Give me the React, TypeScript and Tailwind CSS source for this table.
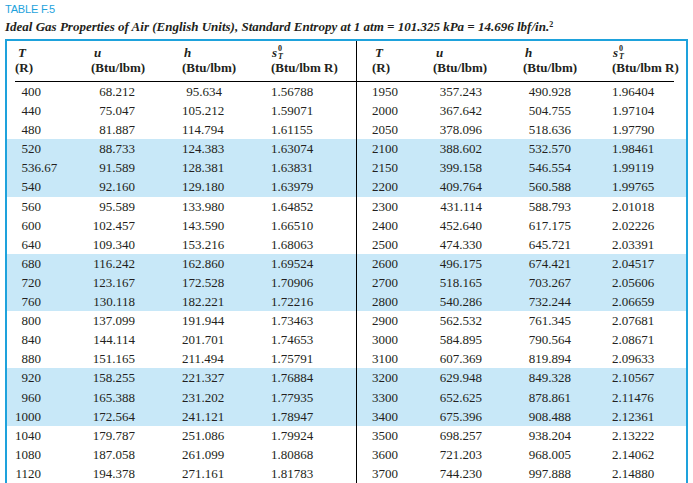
const rows: [string, string, string, string, string, string, string, string][] = [
  ['400', '68.212', '95.634', '1.56788', '1950', '357.243', '490.928', '1.96404'],
  ['440', '75.047', '105.212', '1.59071', '2000', '367.642', '504.755', '1.97104'],
  ['480', '81.887', '114.794', '1.61155', '2050', '378.096', '518.636', '1.97790'],
  ['520', '88.733', '124.383', '1.63074', '2100', '388.602', '532.570', '1.98461'],
  ['536.67', '91.589', '128.381', '1.63831', '2150', '399.158', '546.554', '1.99119'],
  ['540', '92.160', '129.180', '1.63979', '2200', '409.764', '560.588', '1.99765'],
  ['560', '95.589', '133.980', '1.64852', '2300', '431.114', '588.793', '2.01018'],
  ['600', '102.457', '143.590', '1.66510', '2400', '452.640', '617.175', '2.02226'],
  ['640', '109.340', '153.216', '1.68063', '2500', '474.330', '645.721', '2.03391'],
  ['680', '116.242', '162.860', '1.69524', '2600', '496.175', '674.421', '2.04517'],
  ['720', '123.167', '172.528', '1.70906', '2700', '518.165', '703.267', '2.05606'],
  ['760', '130.118', '182.221', '1.72216', '2800', '540.286', '732.244', '2.06659'],
  ['800', '137.099', '191.944', '1.73463', '2900', '562.532', '761.345', '2.07681'],
  ['840', '144.114', '201.701', '1.74653', '3000', '584.895', '790.564', '2.08671'],
  ['880', '151.165', '211.494', '1.75791', '3100', '607.369', '819.894', '2.09633'],
  ['920', '158.255', '221.327', '1.76884', '3200', '629.948', '849.328', '2.10567'],
  ['960', '165.388', '231.202', '1.77935', '3300', '652.625', '878.861', '2.11476'],
  ['1000', '172.564', '241.121', '1.78947', '3400', '675.396', '908.488', '2.12361'],
  ['1040', '179.787', '251.086', '1.79924', '3500', '698.257', '938.204', '2.13222'],
  ['1080', '187.058', '261.099', '1.80868', '3600', '721.203', '968.005', '2.14062'],
  ['1120', '194.378', '271.161', '1.81783', '3700', '744.230', '997.888', '2.14880'],
]

// rows 3-5, 9-11, 15-17 are shaded
const shaded = (i: number) => Math.floor(i / 3) % 2 === 1

function Temp({ v }: { v: string }) {
  const [int, frac] = v.split('.')
  return (
    <span className="whitespace-nowrap">
      <span className="inline-block w-[26px] text-right">{int}</span>
      {frac ? `.${frac}` : ''}
    </span>
  )
}

// s with stacked superscript 0 and subscript T
function Entropy() {
  return (
    <span className="relative inline-block italic font-bold">
      s
      <span className="absolute left-[6px] top-[0px] text-[8px] leading-none not-italic">0</span>
      <span className="absolute left-[6px] top-[8px] text-[8px] leading-none">T</span>
    </span>
  )
}

function HeaderHalf({ right }: { right?: boolean }) {
  return (
    <div
      className={`grid ${
        right
          ? 'grid-cols-[15px_61px_90px_89px_1fr]'
          : 'w-[350px] border-r border-black grid-cols-[8px_76px_91px_89px_1fr]'
      } pt-[4px] pb-[6px] font-bold leading-[15px]`}
    >
      <div />
      <div>
        <div className="italic pl-[3px]">T</div>
        <div>(R)</div>
      </div>
      <div>
        <div className="italic pl-[3px]">u</div>
        <div>(Btu/lbm)</div>
      </div>
      <div>
        <div className="italic pl-[2px]">h</div>
        <div>(Btu/lbm)</div>
      </div>
      <div className="whitespace-nowrap">
        <div className="pl-[1px] h-[15px]">
          <Entropy />
        </div>
        <div>(Btu/lbm R)</div>
      </div>
    </div>
  )
}

export default function App() {
  return (
    <div className="bg-white w-[693px] h-[483px] overflow-hidden font-['Liberation_Serif',serif] text-[#231f20]">
      <div className="pl-[5px] pt-[3px]">
        <p className="font-['Liberation_Sans',sans-serif] text-[11px] leading-[13px] text-[#1ea2dc] tracking-[-0.2px]">
          TABLE F.5
        </p>
        <p className="mt-[3px] text-[13px] leading-[16px] font-bold italic whitespace-nowrap">
          Ideal Gas Properties of Air (English Units), Standard Entropy at 1 atm = 101.325 kPa = 14.696 lbf/in.
          <sup className="text-[8px] not-italic">2</sup>
        </p>
      </div>

      <div className="ml-[5px] mt-[4px] w-[683px] border-t-2 border-x-2 border-[#1ea2dc] text-[13px]">
        {/* header */}
        <div className="flex">
          <HeaderHalf />
          <div className="flex-1">
            <HeaderHalf right />
          </div>
        </div>
        <div className="flex h-px">
          <div className="w-[8px]" />
          <div className="w-[342px] bg-black" />
          <div className="w-[1px] bg-black" />
          <div className="w-[316px] bg-black" />
        </div>

        {/* data */}
        {rows.map((r, i) => (
          <div
            key={i}
            className={`flex h-[19.1px] leading-[19px] ${shaded(i) ? 'bg-[#c8e8f8]' : ''}`}
          >
            <div className="w-[350px] border-r border-black grid grid-cols-[8px_76px_91px_89px_1fr]">
              <div />
              <div>
                <Temp v={r[0]} />
              </div>
              <div className="text-right pr-[47px]">{r[1]}</div>
              <div className="text-right pr-[49px]">{r[2]}</div>
              <div>{r[3]}</div>
            </div>
            <div className="flex-1 grid grid-cols-[15px_61px_90px_89px_1fr]">
              <div />
              <div>
                <Temp v={r[4]} />
              </div>
              <div className="text-right pr-[41px]">{r[5]}</div>
              <div className="text-right pr-[41px]">{r[6]}</div>
              <div>{r[7]}</div>
            </div>
          </div>
        ))}
      </div>
    </div>
  )
}
